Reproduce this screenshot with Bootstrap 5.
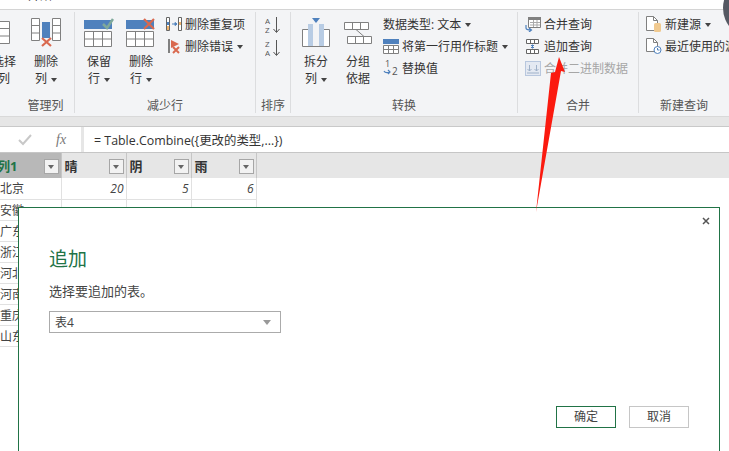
<!DOCTYPE html>
<html lang="zh-CN">
<head>
    <meta charset="UTF-8">
    <title>追加查询</title>
    <link href="https://cdn.jsdelivr.net/npm/bootstrap@5.3.0/dist/css/bootstrap.min.css" rel="stylesheet">
    <style>
        html, body {
            height: 451px;
            overflow: hidden;
        }
        body {
            background: #fff;
            color: #444;
            font-family: "Open Sans", "Noto Sans CJK SC", sans-serif;
            font-size: 12px;
            line-height: 17px;
            position: relative;
        }
        svg { display: block; flex: none; }

        /* ribbon */
        .tab-strip {
            height: 10px;
            border-bottom: 1px solid #d4d4d4;
            overflow: hidden;
            padding-left: 28px;
            line-height: 6px;
        }
        .tab-strip span { display: block; margin-top: -7px; color: #333; }
        .ribbon {
            height: 106px;
            background: #f3f4f6;
            padding-top: 2px;
            white-space: nowrap;
        }
        .rb-group {
            height: 101px;
            border-right: 1px solid #dcdddf;
            overflow: hidden;
        }
        .rb-body { height: 84px; }
        .rb-label { height: 17px; text-align: center; color: #555; padding-top: 1px; }
        .g1 { width: 75px; }
        .g1 .rb-body { margin-left: -17px; }
        .g1 .rb-label { padding-left: 17px; }
        .g2 { width: 181px; }
        .g2 .rb-body { padding-left: 3px; }
        .g3 { width: 35px; }
        .g4 { width: 227px; }
        .g4 .rb-body { padding-left: 4px; }
        .g5 { width: 121px; }
        .g5 .rb-body, .g6 .rb-body { padding-left: 7px; }
        .g6 { width: 90px; border-right: 0; }
        .big-btn { width: 42px; text-align: center; color: #333; }
        .big-icon { height: 41px; }
        .small-col { padding-top: 1px; }
        .small-row { height: 22px; color: #333; gap: 3px; }
        .small-off { color: #a6a6a6; }
        .caret-down {
            display: inline-block;
            border: 3px solid transparent;
            border-top: 4px solid #444;
            border-bottom: 0;
            vertical-align: middle;
            margin-left: 4px;
        }

        /* formula bar */
        .strip-grey {
            height: 11px;
            background: #e6e6e6;
            border-top: 1px solid #d9d9d9;
            border-bottom: 1px solid #c9c9c9;
        }
        .formula-row {
            height: 26px;
            background: #e6e6e6;
            border-bottom: 1px solid #c6c6c6;
            gap: 3px;
        }
        .formula-tools { width: 81px; background: #fff; padding-left: 18px; gap: 24px; }
        .fx-mark { font-family: "Liberation Serif", serif; font-style: italic; font-size: 14px; color: #777; }
        .formula-input { background: #fff; padding: 1px 0 0 10px; color: #333; font-size: 12.4px; }

        /* data table */
        .data-grid {
            width: 100%;
            table-layout: fixed;
            border-collapse: collapse;
        }
        .data-grid th {
            height: 25px;
            padding: 2px 0 0 3px;
            background: #e6e6e6;
            color: #333;
            font-weight: 700;
            font-size: 13px;
            border-right: 1px solid #c6c6c6;
        }
        .data-grid th.col-active { background: #b8b8b8; color: #217346; padding-left: 0; }
        .data-grid th.col-active span:first-child { margin-left: -3px; }
        .data-grid th.col-rest { border-right: 0; }
        .data-grid td {
            height: 21px;
            padding: 1px 2px 0 0;
            color: #444;
            border-right: 1px solid #e1e1e1;
            border-bottom: 1px solid #e1e1e1;
        }
        .data-grid td.num { text-align: right; font-style: italic; }
        .data-grid td.col-rest { border: 0; }
        .col-w1 { width: 61px; }
        .col-w2 { width: 65px; }
        .filter-btn {
            width: 15px;
            height: 15px;
            background: #f2f2f2;
            border: 1px solid #a6a6a6;
            margin-right: 2px;
        }
        .filter-btn::after {
            content: "";
            border: 3px solid transparent;
            border-top: 4px solid #666;
            border-bottom: 0;
        }

        /* dialog */
        .append-dialog {
            position: absolute;
            left: 18px;
            top: 207px;
            width: 702px;
            height: 260px;
            background: #fff;
            border: 1px solid #217346;
            padding: 37px 30px 0;
        }
        .dialog-close {
            position: absolute;
            right: 9px;
            top: 9px;
        }
        .dialog-title {
            font-size: 19px;
            line-height: 28px;
            font-weight: 400;
            color: #217346;
            margin: 0 0 8px;
        }
        .dialog-text { font-size: 13px; line-height: 20px; color: #444; margin: 0 0 10px; }
        .table-pick {
            width: 232px;
            height: 22px;
            border: 1px solid #ababab;
            padding: 0 9px 0 5px;
        }
        .table-pick::after {
            content: "";
            border: 4px solid transparent;
            border-top: 5px solid #999;
            border-bottom: 0;
        }
        .dialog-btns { margin-top: 73px; gap: 13px; width: 640px; }
        .btn-office {
            width: 60px;
            height: 22px;
            padding: 0;
            border-radius: 0;
            font-size: 12px;
            line-height: 18px;
            color: #444;
            background: #fff;
            border: 1px solid #c6c6c6;
        }
        .btn-office-main { border-color: #217346; }

        .overlay-marks { position: absolute; left: 0; top: 0; pointer-events: none; }
    </style>
</head>
<body>
    <div class="tab-strip"><span>开始</span></div>

    <div class="ribbon d-flex">
        <div class="rb-group g1">
            <div class="rb-body d-flex">
                <div class="big-btn">
                    <div class="big-icon d-flex align-items-center justify-content-center">
                        <svg width="28" height="23" viewBox="0 0 28 23"><rect x="1" y=".5" width="9" height="22" fill="#4f81bd"/><rect x="10" y="1" width="9" height="21" fill="#fff"/><path d="M10 .5h9.500v22H10M10 7.500h9M10 15h9" fill="none" stroke="#808080"/><rect x="-8" y="1" width="18" height="21" fill="#4f81bd"/></svg>
                    </div>
                    <div>选择</div>
                    <div>列</div>
                </div>
                <div class="big-btn">
                    <div class="big-icon d-flex align-items-center justify-content-center">
                        <svg width="30" height="29" viewBox="0 0 30 29"><path d="M.5.500h8v22h-8zM.5 7.500h8M.5 15h8M21.500.5h8v22h-8zM21.500 7.500h8M21.500 15h8" fill="#fff" stroke="#808080"/><rect x="11" y="4" width="8" height="16" fill="#4f81bd"/><path d="M11 20l9 8M20 20l-9 8" stroke="#d9694f" stroke-width="2.200"/></svg>
                    </div>
                    <div>删除</div>
                    <div>列<i class="caret-down"></i></div>
                </div>
            </div>
            <div class="rb-label">管理列</div>
        </div>

        <div class="rb-group g2">
            <div class="rb-body d-flex">
                <div class="big-btn">
                    <div class="big-icon d-flex align-items-center justify-content-center">
                        <svg width="30" height="30" viewBox="0 0 30 30"><rect x="0" y="2" width="28" height="9" fill="#4f81bd"/><path d="M19 6l4 4 6-9" fill="none" stroke="#7fa99b" stroke-width="2.500"/><path d="M.5 13.500h27v15H.5zM.5 21h27M9.500 13.500v15M18.500 13.500v15" fill="#fff" stroke="#808080"/></svg>
                    </div>
                    <div>保留</div>
                    <div>行<i class="caret-down"></i></div>
                </div>
                <div class="big-btn">
                    <div class="big-icon d-flex align-items-center justify-content-center">
                        <svg width="30" height="30" viewBox="0 0 30 30"><rect x="0" y="2" width="28" height="9" fill="#4f81bd"/><path d="M18 1l10 10M28 1L18 11" stroke="#d9694f" stroke-width="2.200"/><path d="M.5 13.500h27v15H.5zM.5 21h27M9.500 13.500v15M18.500 13.500v15" fill="#fff" stroke="#808080"/></svg>
                    </div>
                    <div>删除</div>
                    <div>行<i class="caret-down"></i></div>
                </div>
                <div class="small-col ms-1">
                    <div class="small-row d-flex align-items-center">
                        <svg width="16" height="14" viewBox="0 0 16 14"><path d="M.5.500h3v13h-3zM12.500.5h3v13h-3z" fill="#fff" stroke="#666"/><rect x="1" y="5" width="2" height="3" fill="#4f81bd"/><rect x="1" y="9" width="2" height="4" fill="#f0b36b"/><rect x="13" y="5" width="2" height="3" fill="#f0b36b"/><path d="M6 7h4M9 5.500L11 7 9 8.500z" stroke="#4f81bd" fill="#4f81bd"/></svg>
                        <span>删除重复项</span>
                    </div>
                    <div class="small-row d-flex align-items-center">
                        <svg width="16" height="15" viewBox="0 0 16 15"><rect x="2" y="0" width="2" height="14" fill="#808080"/><path d="M5 1l8 4-8 4z" fill="#d9694f"/><path d="M7 8l6 6M13 8l-6 6" stroke="#d9694f" stroke-width="2"/></svg>
                        <span>删除错误<i class="caret-down"></i></span>
                    </div>
                </div>
            </div>
            <div class="rb-label">减少行</div>
        </div>

        <div class="rb-group g3">
            <div class="rb-body d-flex flex-column align-items-center pt-1">
                <svg width="16" height="19" viewBox="0 0 16 19"><text x="0" y="8" font-size="8" fill="#555" font-family="Open Sans">A</text><text x="0" y="16.500" font-size="8" fill="#555" font-family="Open Sans">Z</text><path d="M11.500 1v15M8.500 13l3 3.500 3-3.500" fill="none" stroke="#555"/></svg>
                <svg class="mt-1" width="16" height="19" viewBox="0 0 16 19"><text x="0" y="8" font-size="8" fill="#555" font-family="Open Sans">Z</text><text x="0" y="16.500" font-size="8" fill="#555" font-family="Open Sans">A</text><path d="M11.500 1v15M8.500 13l3 3.500 3-3.500" fill="none" stroke="#555"/></svg>
            </div>
            <div class="rb-label">排序</div>
        </div>

        <div class="rb-group g4">
            <div class="rb-body d-flex">
                <div class="big-btn">
                    <div class="big-icon d-flex align-items-center justify-content-center">
                        <svg width="28" height="29" viewBox="0 0 28 29"><path d="M10 0h8l-4 5z" fill="#4f81bd"/><path d="M6.500 11.500h-6v17h6M21.500 11.500h6v17h-6" fill="#fff" stroke="#808080"/><rect x="6" y="6" width="5" height="23" fill="#b8cce4"/><rect x="17" y="6" width="5" height="23" fill="#b8cce4"/><path d="M6 28.500h16" stroke="#808080"/></svg>
                    </div>
                    <div>拆分</div>
                    <div>列<i class="caret-down"></i></div>
                </div>
                <div class="big-btn">
                    <div class="big-icon d-flex align-items-center justify-content-center">
                        <svg width="28" height="22" viewBox="0 0 28 22"><path d="M.5.500h24v7H.5zM8.500.5v7M16.500.5v7M3.500 14.500h24v7h-24zM11.500 14.500v7M19.500 14.500v7" fill="#fff" stroke="#808080"/><path d="M12 7.500l8 7" stroke="#808080"/></svg>
                    </div>
                    <div>分组</div>
                    <div>依据</div>
                </div>
                <div class="small-col ms-1">
                    <div class="small-row d-flex align-items-center">
                        <span>数据类型: 文本<i class="caret-down"></i></span>
                    </div>
                    <div class="small-row d-flex align-items-center">
                        <svg width="16" height="15" viewBox="0 0 16 15"><rect width="16" height="5" fill="#4f81bd"/><path d="M.5 6.500h15v8H.5zM.5 10.500h15M5.500 6.500v8M10.500 6.500v8" fill="#fff" stroke="#808080"/></svg>
                        <span>将第一行用作标题<i class="caret-down"></i></span>
                    </div>
                    <div class="small-row d-flex align-items-center">
                        <svg width="16" height="18" viewBox="0 0 16 18"><text x="2" y="8" font-size="9" fill="#555" font-family="Open Sans">1</text><text x="9" y="16" font-size="10" fill="#555" font-family="Open Sans">2</text><path d="M1 12c1 2 3 2 6 1M5 11l2 2-2 2" fill="none" stroke="#4f81bd" stroke-width="1.200"/></svg>
                        <span>替换值</span>
                    </div>
                </div>
            </div>
            <div class="rb-label">转换</div>
        </div>

        <div class="rb-group g5">
            <div class="rb-body">
                <div class="small-col">
                    <div class="small-row d-flex align-items-center">
                        <svg width="16" height="15" viewBox="0 0 16 15"><path d="M3.500.5h12v10h-12z" fill="#fff" stroke="#808080"/><rect x="3" y="0" width="13" height="3" fill="#808080"/><path d="M5 5.500h10M5 8h10M8.500 3v7M12 3v7" stroke="#aaa"/><path d="M1 8v3c0 2 2 2 5 2M4 11l2.500 2L4 15" fill="none" stroke="#4f81bd" stroke-width="1.200"/></svg>
                        <span>合并查询</span>
                    </div>
                    <div class="small-row d-flex align-items-center">
                        <svg width="16" height="15" viewBox="0 0 16 15"><path d="M1.500.5h12v4h-12zM1.500 10.500h12v4h-12zM5.500.5v4M9.500.5v4M5.500 10.500v4M9.500 10.500v4" fill="#fff" stroke="#666"/><path d="M7.500 5.500v4M6 6.500h3M6 8.500h3" stroke="#4f81bd"/></svg>
                        <span>追加查询</span>
                    </div>
                    <div class="small-row small-off d-flex align-items-center">
                        <svg width="16" height="15" viewBox="0 0 16 15"><rect x=".5" y=".5" width="15" height="14" fill="#e4e9f2" stroke="#b8c7de"/><path d="M4.500 4v6M2.500 8l2 2 2-2M11.500 4v6M9.500 8l2 2 2-2M2 12h12" fill="none" stroke="#9fb1c9"/></svg>
                        <span>合并二进制数据</span>
                    </div>
                </div>
            </div>
            <div class="rb-label">合并</div>
        </div>

        <div class="rb-group g6">
            <div class="rb-body">
                <div class="small-col">
                    <div class="small-row d-flex align-items-center">
                        <svg width="16" height="16" viewBox="0 0 16 16"><path d="M.5.500h7l4 4v10h-11z" fill="#fff" stroke="#808080"/><path d="M7.500.5v4h4" fill="none" stroke="#808080"/><rect x="8" y="7" width="7" height="9" rx="1.500" fill="#f0c98f"/></svg>
                        <span>新建源<i class="caret-down"></i></span>
                    </div>
                    <div class="small-row d-flex align-items-center">
                        <svg width="16" height="16" viewBox="0 0 16 16"><path d="M.5.500h7l4 4v9h-11z" fill="#fff" stroke="#808080"/><path d="M7.500.5v4h4" fill="none" stroke="#808080"/><circle cx="11.500" cy="12" r="3.500" fill="#fff" stroke="#4f81bd"/><path d="M11.500 10v2h2" fill="none" stroke="#4f81bd"/></svg>
                        <span>最近使用的源</span>
                    </div>
                </div>
            </div>
            <div class="rb-label">新建查询</div>
        </div>
    </div>

    <div class="strip-grey"></div>

    <div class="formula-row d-flex">
        <div class="formula-tools d-flex align-items-center">
            <svg width="14" height="12" viewBox="0 0 14 12"><path d="M1 6l4 4 8-9" fill="none" stroke="#c8c8c8" stroke-width="2"/></svg>
            <span class="fx-mark">fx</span>
        </div>
        <div class="formula-input flex-grow-1 d-flex align-items-center">= Table.Combine({更改的类型,...})</div>
    </div>

    <table class="data-grid">
        <colgroup>
            <col class="col-w1"><col class="col-w2"><col class="col-w2"><col class="col-w2"><col>
        </colgroup>
        <thead>
            <tr>
                <th class="col-active"><div class="d-flex justify-content-between align-items-center"><span>列1</span><span class="filter-btn d-flex align-items-center justify-content-center"></span></div></th>
                <th><div class="d-flex justify-content-between align-items-center"><span>晴</span><span class="filter-btn d-flex align-items-center justify-content-center"></span></div></th>
                <th><div class="d-flex justify-content-between align-items-center"><span>阴</span><span class="filter-btn d-flex align-items-center justify-content-center"></span></div></th>
                <th><div class="d-flex justify-content-between align-items-center"><span>雨</span><span class="filter-btn d-flex align-items-center justify-content-center"></span></div></th>
                <th class="col-rest"></th>
            </tr>
        </thead>
        <tbody id="gridBody"></tbody>
    </table>

    <div class="append-dialog">
        <svg class="dialog-close" width="8" height="8" viewBox="0 0 8 8"><path d="M1 1l6 6M7 1L1 7" stroke="#555" stroke-width="1.500"/></svg>
        <h2 class="dialog-title">追加</h2>
        <p class="dialog-text">选择要追加的表。</p>
        <div class="table-pick d-flex align-items-center justify-content-between"><span>表4</span></div>
        <div class="dialog-btns d-flex justify-content-end">
            <button type="button" class="btn btn-office btn-office-main">确定</button>
            <button type="button" class="btn btn-office">取消</button>
        </div>
    </div>

    <svg class="overlay-marks" width="729" height="451" viewBox="0 0 729 451">
        <circle cx="753" cy="8" r="30" fill="#555963"/>
        <path d="M559 57L565 72 561 71 536 212 551 73 555 72z" fill="#fb1a0f"/>
    </svg>

    <script>
        // rows of the query preview
        const rows = [
            ['北京', 20, 5, 6], ['安徽', '', '', ''], ['广东', '', '', ''], ['浙江', '', '', ''],
            ['河北', '', '', ''], ['河南', '', '', ''], ['重庆', '', '', ''], ['山东', '', '', '']
        ];
        const body = document.getElementById('gridBody');
        rows.forEach(r => {
            const tr = document.createElement('tr');
            r.forEach((v, i) => {
                const td = document.createElement('td');
                td.textContent = v;
                if (i > 0) td.className = 'num';
                tr.appendChild(td);
            });
            const rest = document.createElement('td');
            rest.className = 'col-rest';
            tr.appendChild(rest);
            body.appendChild(tr);
        });
    </script>
    <script src="https://cdn.jsdelivr.net/npm/bootstrap@5.3.0/dist/js/bootstrap.bundle.min.js"></script>
</body>
</html>
